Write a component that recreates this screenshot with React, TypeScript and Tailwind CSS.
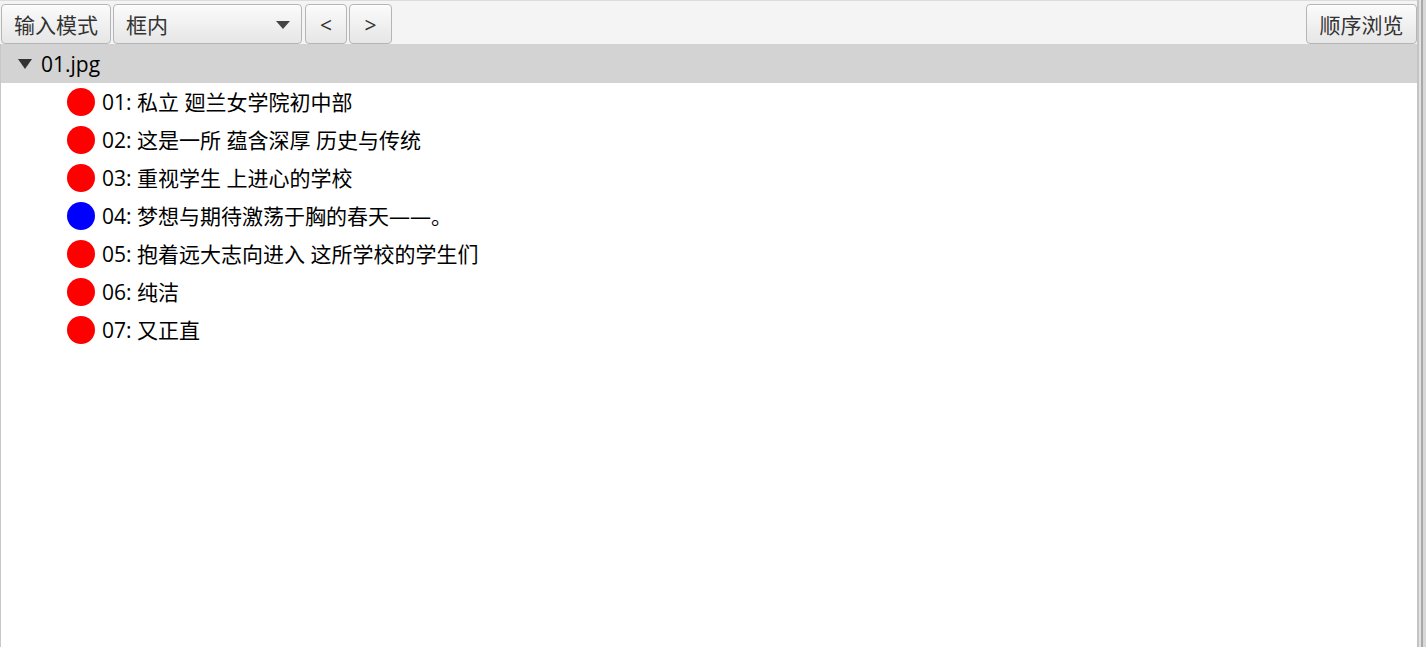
const rows = [
  { id: "01", text: "私立 廻兰女学院初中部", color: "bg-[#ff0000]" },
  { id: "02", text: "这是一所 蕴含深厚 历史与传统", color: "bg-[#ff0000]" },
  { id: "03", text: "重视学生 上进心的学校", color: "bg-[#ff0000]" },
  { id: "04", text: "梦想与期待激荡于胸的春天——。", color: "bg-[#0000ff]" },
  { id: "05", text: "抱着远大志向进入 这所学校的学生们", color: "bg-[#ff0000]" },
  { id: "06", text: "纯洁", color: "bg-[#ff0000]" },
  { id: "07", text: "又正直", color: "bg-[#ff0000]" },
];

const font = "font-['Open_Sans','Noto_Sans_CJK_SC',sans-serif]";

function ToolButton({ label, className = "" }: { label: string; className?: string }) {
  return (
    <button
      className={`h-[40px] rounded-[4px] border border-[#b5b5b5] bg-gradient-to-b from-[#fbfbfb] to-[#e6e6e6] text-[21px] text-[#333] leading-none pt-[2px] shadow-[inset_0_1px_0_#ffffff] ${className}`}
    >
      {label}
    </button>
  );
}

export default function App() {
  return (
    <div className={`w-[1426px] h-[647px] flex bg-white overflow-hidden ${font}`}>
      <div className="flex-1 flex flex-col min-w-0">
        {/* toolbar */}
        <div className="h-[44px] bg-[#f4f4f4] border-t border-[#dcdcdc] flex items-center pt-[3px]">
          <ToolButton label="输入模式" className="w-[110px] ml-[1px]" />
          <button className="ml-[2px] w-[189px] h-[40px] rounded-[4px] border border-[#b5b5b5] bg-gradient-to-b from-[#fbfbfb] to-[#e6e6e6] shadow-[inset_0_1px_0_#ffffff] flex items-center justify-between pl-[12px] pr-[11px] pt-[2px] text-[21px] text-[#333] leading-none">
            <span>框内</span>
            <svg width="14" height="8" viewBox="0 0 14 8">
              <polygon points="0,0 14,0 7,8" fill="#444" />
            </svg>
          </button>
          <ToolButton label="<" className="ml-[3px] w-[42px]" />
          <ToolButton label=">" className="ml-[2px] w-[43px]" />
          <div className="flex-1" />
          <ToolButton label="顺序浏览" className="w-[111px]" />
        </div>
        {/* tree */}
        <div className="flex-1 border-l border-[#c8c8c8] flex flex-col">
          <div className="h-[39px] bg-[#d3d3d3] flex items-center text-[21px] text-black">
            <svg width="14" height="10" viewBox="0 0 14 10" className="ml-[17px] mr-[9px]">
              <polygon points="0,0 14,0 7,10" fill="#333" />
            </svg>
            <span className="pt-[2px]">01.jpg</span>
          </div>
          {rows.map((r) => (
            <div key={r.id} className="h-[38px] flex items-center text-[21px] text-black">
              <span className={`ml-[66px] w-[28px] h-[28px] rounded-full ${r.color}`} />
              <span className="ml-[7px] pt-[2px] whitespace-pre">{`${r.id}: ${r.text}`}</span>
            </div>
          ))}
        </div>
      </div>
      {/* right edge */}
      <div className="w-[9px] flex">
        <div className="w-[2px] bg-[#c4c4c4]" />
        <div className="w-[2px] bg-[#e2e2e2]" />
        <div className="w-[2px] bg-[#a9a9a9]" />
        <div className="w-[3px] bg-[#d8d8d8]" />
      </div>
    </div>
  );
}
